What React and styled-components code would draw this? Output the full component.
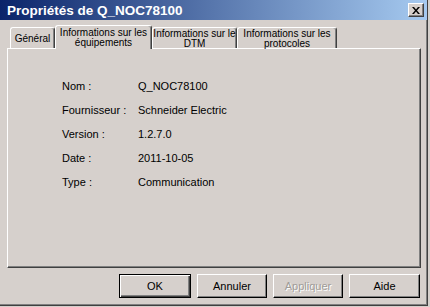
// Properties dialog - Q_NOC78100
import React from "react";
import styled, { createGlobalStyle } from "styled-components";

const GlobalStyle = createGlobalStyle`
  html, body {
    margin: 0;
    padding: 0;
    width: 430px;
    height: 307px;
    overflow: hidden;
    background: #d6d0cc;
    font-family: "Liberation Sans", Arial, sans-serif;
  }
`;

const Window = styled.div`
  box-sizing: border-box;
  width: 428px;
  height: 306px;
  background: #d6d0cc;
  border-right: 1px solid #404040;
  border-bottom: 1px solid #404040;
  box-shadow: inset -1px -1px #808080;
  display: flex;
  flex-direction: column;
`;

const TitleBar = styled.div`
  height: 20px;
  display: flex;
  align-items: center;
  justify-content: space-between;
  padding: 0 3px 0 7px;
  background: linear-gradient(to right, #0a246a, #a6caf0);
  color: #fff;
  font-weight: bold;
  font-size: 13.5px;
`;

const CloseButton = styled.div`
  box-sizing: border-box;
  width: 16px;
  height: 14px;
  background: #d6d0cc;
  border-top: 1px solid #fff;
  border-left: 1px solid #fff;
  border-right: 1px solid #404040;
  border-bottom: 1px solid #404040;
  box-shadow: inset -1px -1px #808080;
  display: flex;
  align-items: center;
  justify-content: center;
`;

const Body = styled.div`
  padding: 4px 0 0 7px;
`;

const TabStrip = styled.div`
  display: flex;
  align-items: flex-end;
  height: 24px;
  padding-left: 3px;
  position: relative;
  z-index: 1;
`;

const Tab = styled.div`
  box-sizing: border-box;
  width: ${(p) => p.$w}px;
  height: ${(p) => (p.$active ? 24 : 21)}px;
  margin-bottom: ${(p) => (p.$active ? -1 : 0)}px;
  background: #d6d0cc;
  border-top: 1px solid #fff;
  border-left: 1px solid #fff;
  border-right: 1px solid #404040;
  box-shadow: inset -1px 0 #808080;
  border-radius: 3px 3px 0 0;
  display: flex;
  align-items: center;
  justify-content: center;
  text-align: center;
  white-space: nowrap;
  font-size: 10px;
  line-height: 10px;
  color: #000;
  padding-top: ${(p) => (p.$active ? 0 : 1)}px;
`;

const Panel = styled.div`
  box-sizing: border-box;
  width: 414px;
  height: 220px;
  border-top: 1px solid #fff;
  border-left: 1px solid #fff;
  border-right: 1px solid #404040;
  border-bottom: 1px solid #404040;
  box-shadow: inset -1px -1px #808080;
  padding: 25px 0 0 54px;
`;

const InfoGrid = styled.div`
  display: grid;
  grid-template-columns: 76px auto;
  grid-auto-rows: 24px;
  align-items: center;
  font-size: 11px;
  color: #000;
`;

const Buttons = styled.div`
  display: flex;
  justify-content: flex-end;
  gap: 6px;
  padding: 6px 7px 0 0;
`;

const Button = styled.div`
  box-sizing: border-box;
  width: ${(p) => p.$w}px;
  height: 24px;
  display: flex;
  align-items: center;
  justify-content: center;
  font-size: 11px;
  color: ${(p) => (p.$disabled ? "#a09c98" : "#000")};
  text-shadow: ${(p) => (p.$disabled ? "1px 1px #fff" : "none")};
  border-top: 1px solid ${(p) => (p.$default ? "#000" : "#fff")};
  border-left: 1px solid ${(p) => (p.$default ? "#000" : "#fff")};
  border-right: 1px solid #000;
  border-bottom: 1px solid #000;
  box-shadow: ${(p) =>
    p.$default
      ? "inset 1px 1px #fff, inset -1px -1px #404040, inset -2px -2px #808080"
      : "inset -1px -1px #808080"};
`;

const rows = [
  ["Nom :", "Q_NOC78100"],
  ["Fournisseur :", "Schneider Electric"],
  ["Version :", "1.2.7.0"],
  ["Date :", "2011-10-05"],
  ["Type :", "Communication"],
];

const App = () => {
  return (
    <>
      <GlobalStyle />
      <Window>
        <TitleBar>
          <span>Propriétés de Q_NOC78100</span>
          <CloseButton>
            <svg width="8" height="7" viewBox="0 0 8 7">
              <path d="M0 0h2l2 2.5L6 0h2L5 3.5 8 7H6L4 4.5 2 7H0l3-3.5z" fill="#000" />
            </svg>
          </CloseButton>
        </TitleBar>
        <Body>
          <TabStrip>
            <Tab $w={45}>Général</Tab>
            <Tab $w={97} $active>
              Informations sur les
              <br />
              équipements
            </Tab>
            <Tab $w={85}>
              Informations sur le
              <br />
              DTM
            </Tab>
            <Tab $w={100}>
              Informations sur les
              <br />
              protocoles
            </Tab>
          </TabStrip>
          <Panel>
            <InfoGrid>
              {rows.map(([label, value]) => (
                <React.Fragment key={label}>
                  <span>{label}</span>
                  <span>{value}</span>
                </React.Fragment>
              ))}
            </InfoGrid>
          </Panel>
        </Body>
        <Buttons>
          <Button $w={72} $default>OK</Button>
          <Button $w={70}>Annuler</Button>
          <Button $w={70} $disabled>Appliquer</Button>
          <Button $w={71}>Aide</Button>
        </Buttons>
      </Window>
    </>
  );
};

export default App;
